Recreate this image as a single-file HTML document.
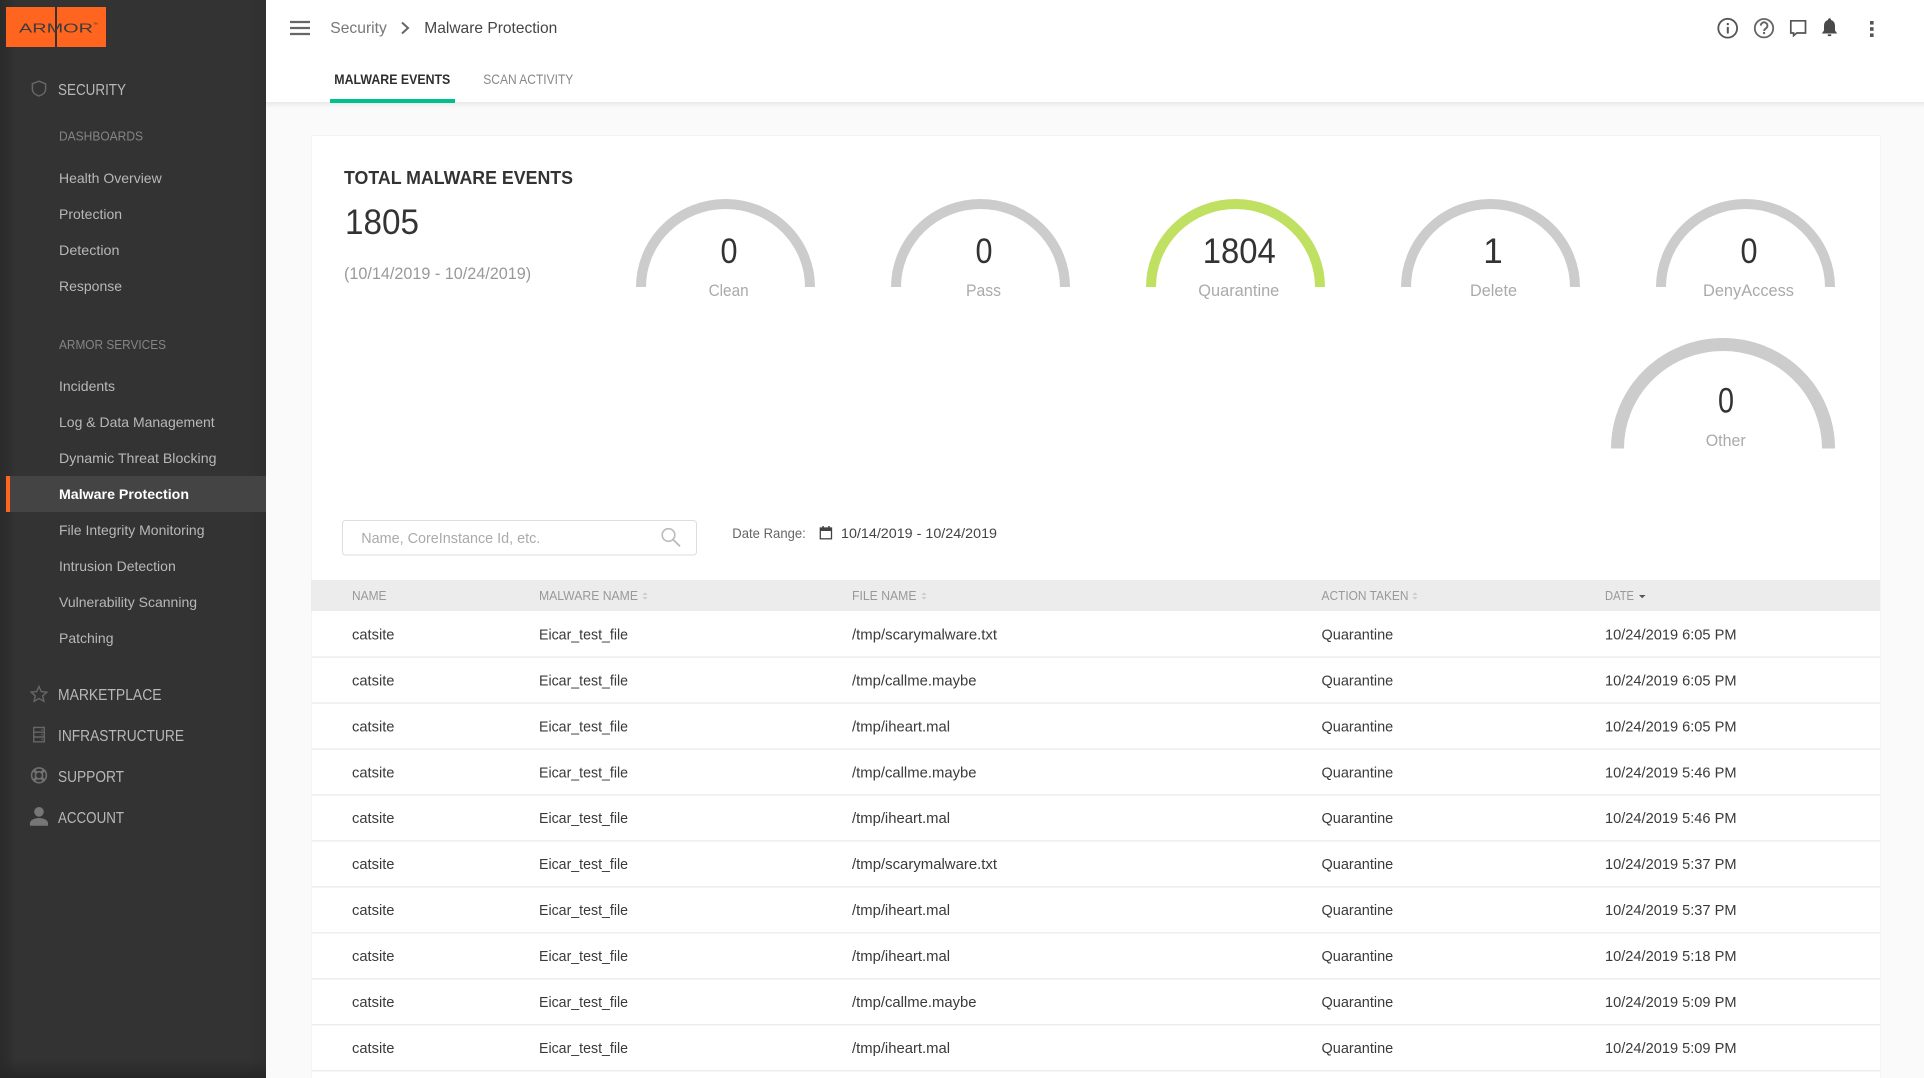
<!DOCTYPE html>
<html lang="en">
<head>
<meta charset="utf-8">
<title>Malware Protection</title>
<style>
html,body{margin:0;padding:0;background:#fafafa;width:1924px;height:1078px;overflow:hidden}
svg{display:block}
text{font-family:"Liberation Sans",Arial,sans-serif}
.nav{font-size:14px;fill:#b8b8b8}
.sec{font-size:15.5px;fill:#b8b8b8}
.lab{font-size:12.5px;fill:#858585}
.th{font-size:12.5px;fill:#999}
.td{font-size:14.5px;fill:#3a3a3a}
.val{font-size:35px;fill:#333;text-anchor:middle}
.cap{font-size:17px;fill:#aaa}
.g{fill:none;stroke:#ccc;stroke-width:10}
</style>
</head>
<body>
<svg xmlns="http://www.w3.org/2000/svg" width="1924" height="1078" viewBox="0 0 1924 1078">
<defs>
<linearGradient id="sg" x1="0" x2="1" y1="0" y2="0"><stop offset="0" stop-color="#2a2a2a"/><stop offset="0.4" stop-color="#2d2d2d"/><stop offset="1" stop-color="#333"/></linearGradient>
<linearGradient id="sr" x1="0" x2="1" y1="0" y2="0"><stop offset="0" stop-color="#333"/><stop offset="1" stop-color="#2f2f2f"/></linearGradient>
<linearGradient id="sb" x1="0" x2="0" y1="0" y2="1"><stop offset="0" stop-color="#2a2a2a" stop-opacity="0"/><stop offset="1" stop-color="#262626"/></linearGradient>
<linearGradient id="hs" x1="0" x2="0" y1="0" y2="1"><stop offset="0" stop-color="#e9e9e9"/><stop offset="1" stop-color="#fafafa"/></linearGradient>
</defs>
<rect width="1924" height="1078" fill="#fafafa"/>

<!-- sidebar -->
<rect x="0" y="0" width="266" height="1078" fill="#333"/>
<rect x="0" y="0" width="16" height="1078" fill="url(#sg)"/>
<rect x="250" y="0" width="16" height="1078" fill="url(#sr)"/>
<rect x="0" y="1058" width="266" height="20" fill="url(#sb)"/>
<rect x="6" y="7" width="100" height="40" fill="#ff651f"/>
<rect x="55" y="7" width="2" height="40" fill="#333"/>
<text x="19" y="32.7" font-size="13" fill="#3c3c3c" textLength="74" lengthAdjust="spacingAndGlyphs">ARMOR</text>
<text x="93" y="26" font-size="5" fill="#3c3c3c">™</text>

<path d="M39 81.2L45.6 83.8V89C45.6 92.4 42.8 94.9 39 96C35.2 94.9 32.4 92.4 32.4 89V83.8Z" fill="none" stroke="#666" stroke-width="1.5"/>
<text class="sec" x="58" y="95" textLength="68" lengthAdjust="spacingAndGlyphs">SECURITY</text>
<text class="lab" x="59" y="140.5" textLength="84" lengthAdjust="spacingAndGlyphs">DASHBOARDS</text>
<text class="nav" x="59" y="183">Health Overview</text>
<text class="nav" x="59" y="219">Protection</text>
<text class="nav" x="59" y="255" textLength="60.5" lengthAdjust="spacingAndGlyphs">Detection</text>
<text class="nav" x="59" y="291">Response</text>
<text class="lab" x="59" y="349" textLength="107" lengthAdjust="spacingAndGlyphs">ARMOR SERVICES</text>
<text class="nav" x="59" y="391">Incidents</text>
<text class="nav" x="59" y="427">Log &amp; Data Management</text>
<text class="nav" x="59" y="463" textLength="157.5" lengthAdjust="spacingAndGlyphs">Dynamic Threat Blocking</text>
<rect x="6" y="476" width="260" height="36" fill="#444"/>
<rect x="6" y="476" width="4" height="36" fill="#ff651f"/>
<text x="59" y="499" font-size="14" font-weight="700" fill="#fff" textLength="130" lengthAdjust="spacingAndGlyphs">Malware Protection</text>
<text class="nav" x="59" y="535">File Integrity Monitoring</text>
<text class="nav" x="59" y="571">Intrusion Detection</text>
<text class="nav" x="59" y="607">Vulnerability Scanning</text>
<text class="nav" x="59" y="643">Patching</text>

<path d="M39 686.5L41.3 691.6L46.8 692.2L42.7 695.9L43.9 701.2L39 698.5L34.1 701.2L35.3 695.9L31.2 692.2L36.7 691.6Z" fill="none" stroke="#666" stroke-width="1.4"/>
<text class="sec" x="58" y="700" textLength="103.5" lengthAdjust="spacingAndGlyphs">MARKETPLACE</text>
<path d="M33.7 727.4H44.3V741.8H33.7ZM33.7 732.2H44.3M33.7 737H44.3" fill="none" stroke="#666" stroke-width="1.4"/>
<circle cx="42" cy="729.9" r=".8" fill="#666"/><circle cx="42" cy="734.7" r=".8" fill="#666"/><circle cx="42" cy="739.4" r=".8" fill="#666"/>
<text class="sec" x="58" y="741" textLength="126" lengthAdjust="spacingAndGlyphs">INFRASTRUCTURE</text>
<circle cx="39" cy="775.3" r="7.4" fill="none" stroke="#707070" stroke-width="1.6"/>
<circle cx="39" cy="775.3" r="3.6" fill="none" stroke="#707070" stroke-width="1.6"/>
<path d="M33.9 770.2L36.4 772.7M44.1 770.2L41.6 772.7M33.9 780.4L36.4 777.9M44.1 780.4L41.6 777.9" stroke="#707070" stroke-width="3"/>
<text class="sec" x="58" y="782" textLength="66" lengthAdjust="spacingAndGlyphs">SUPPORT</text>
<circle cx="39" cy="811.8" r="4.8" fill="#777"/>
<path d="M30 825.8V823.2C30 820 35 818 39 818S48 820 48 823.2V825.8Z" fill="#777"/>
<text class="sec" x="58" y="823" textLength="66" lengthAdjust="spacingAndGlyphs">ACCOUNT</text>

<!-- header -->
<rect x="266" y="102" width="1658" height="6" fill="url(#hs)"/>
<rect x="266" y="0" width="1658" height="102" fill="#fff"/>
<path d="M290 22H310M290 28H310M290 34H310" stroke="#666" stroke-width="2.2"/>
<text x="330.3" y="33" font-size="15.8" fill="#777" textLength="56.5" lengthAdjust="spacingAndGlyphs">Security</text>
<path d="M402 22.5L408 28L402 33.5" fill="none" stroke="#666" stroke-width="2"/>
<text x="424.3" y="33" font-size="15.8" fill="#444" textLength="133" lengthAdjust="spacingAndGlyphs">Malware Protection</text>
<text x="334.3" y="84" font-size="14" font-weight="700" fill="#2f2f2f" textLength="116" lengthAdjust="spacingAndGlyphs">MALWARE EVENTS</text>
<text x="483.3" y="84" font-size="14" fill="#888" textLength="90" lengthAdjust="spacingAndGlyphs">SCAN ACTIVITY</text>
<rect x="330" y="99" width="125" height="4" fill="#00c08b"/>

<!-- top right icons -->
<circle cx="1727.7" cy="28.2" r="9.4" fill="none" stroke="#555" stroke-width="1.8"/>
<rect x="1726.8" y="27" width="2" height="6.5" fill="#555"/><rect x="1726.8" y="23" width="2" height="2.2" fill="#555"/>
<circle cx="1764" cy="28.2" r="9.2" fill="none" stroke="#666" stroke-width="1.8"/>
<path d="M1760.8 25.6A3.3 3.3 0 1 1 1766 28.3C1764.8 29.1 1764.1 29.7 1764.1 31" fill="none" stroke="#666" stroke-width="1.9"/>
<rect x="1763" y="32" width="2.1" height="2.1" fill="#666"/>
<path d="M1790.8 20.8H1805.5V33H1796.8L1793.6 35.6V33H1790.8Z" fill="none" stroke="#555" stroke-width="1.7"/>
<path d="M1829.5 18.3C1830.5 18.3 1831 19 1831 20C1833.8 20.8 1835 23 1835 26V30.5L1837.2 33.5H1821.8L1824 30.5V26C1824 23 1825.2 20.8 1828 20C1828 19 1828.5 18.3 1829.5 18.3Z" fill="#4a4a4a"/>
<rect x="1827.8" y="34.3" width="3.4" height="1.8" fill="#4a4a4a"/>
<rect x="1870" y="21" width="3.6" height="3.6" fill="#555"/><rect x="1870" y="27.2" width="3.6" height="3.6" fill="#555"/><rect x="1870" y="33.4" width="3.6" height="3.6" fill="#555"/>

<!-- card -->
<rect x="311" y="135" width="1570" height="943" fill="#f3f3f3"/>
<rect x="312" y="136" width="1568" height="942" fill="#fff"/>
<text x="344" y="184" font-size="18.5" font-weight="700" fill="#333" textLength="229" lengthAdjust="spacingAndGlyphs">TOTAL MALWARE EVENTS</text>
<text x="345" y="234" font-size="35" fill="#333" textLength="74" lengthAdjust="spacingAndGlyphs">1805</text>
<text x="344" y="279" font-size="16.2" fill="#999">(10/14/2019 - 10/24/2019)</text>

<!-- gauges -->
<path class="g" d="M641 287A84.5 83 0 0 1 810 287"/>
<text class="val" x="729" y="263" textLength="17" lengthAdjust="spacingAndGlyphs">0</text>
<text class="cap" x="708.6" y="296" textLength="40" lengthAdjust="spacingAndGlyphs">Clean</text>

<path class="g" d="M896 287A84.5 83 0 0 1 1065 287"/>
<text class="val" x="984" y="263" textLength="17" lengthAdjust="spacingAndGlyphs">0</text>
<text class="cap" x="966" y="296" textLength="35" lengthAdjust="spacingAndGlyphs">Pass</text>

<path class="g" style="stroke:#bfe060" d="M1151 287A84.5 83 0 0 1 1320 287"/>
<text class="val" x="1239.3" y="263" textLength="73" lengthAdjust="spacingAndGlyphs">1804</text>
<text class="cap" x="1198.3" y="296" textLength="81" lengthAdjust="spacingAndGlyphs">Quarantine</text>

<path class="g" d="M1406 287A84.5 83 0 0 1 1575 287"/>
<text class="val" x="1493" y="263">1</text>
<text class="cap" x="1470" y="296" textLength="47" lengthAdjust="spacingAndGlyphs">Delete</text>

<path class="g" d="M1661 287A84.5 83 0 0 1 1830 287"/>
<text class="val" x="1749" y="263" textLength="17" lengthAdjust="spacingAndGlyphs">0</text>
<text class="cap" x="1703" y="296" textLength="91" lengthAdjust="spacingAndGlyphs">DenyAccess</text>

<path class="g" style="stroke-width:13" d="M1617.5 448.5A105.5 104 0 0 1 1828.5 448.5"/>
<text class="val" x="1726" y="412.7" textLength="16" lengthAdjust="spacingAndGlyphs">0</text>
<text class="cap" x="1705.7" y="446" textLength="40" lengthAdjust="spacingAndGlyphs">Other</text>

<!-- search / date -->
<rect x="342.5" y="520.5" width="354" height="34.5" rx="3" fill="#fff" stroke="#ddd"/>
<text x="361.3" y="543" font-size="15" fill="#aaa" textLength="179" lengthAdjust="spacingAndGlyphs">Name, CoreInstance Id, etc.</text>
<circle cx="668.5" cy="535" r="6.3" fill="none" stroke="#bbb" stroke-width="1.6"/>
<path d="M673 539.5L680 546.3" stroke="#bbb" stroke-width="1.8"/>
<text x="732.3" y="538" font-size="14" fill="#666" textLength="73.5" lengthAdjust="spacingAndGlyphs">Date Range:</text>
<rect x="820.3" y="528" width="11.2" height="10.8" fill="none" stroke="#444" stroke-width="1.3"/>
<rect x="820" y="527.6" width="12" height="3.4" fill="#444"/>
<rect x="822.3" y="526" width="1.5" height="2" fill="#444"/><rect x="828.2" y="526" width="1.5" height="2" fill="#444"/>
<text x="841" y="538" font-size="14" fill="#444" textLength="156" lengthAdjust="spacingAndGlyphs">10/14/2019 - 10/24/2019</text>

<!-- table header -->
<rect x="311" y="580" width="1569" height="31" fill="#ececec"/>
<text class="th" x="352" y="600" textLength="34.5" lengthAdjust="spacingAndGlyphs">NAME</text>
<text class="th" x="539" y="600" textLength="99" lengthAdjust="spacingAndGlyphs">MALWARE NAME</text>
<path d="M642.5 595L645 592.4L647.5 595ZM642.5 597L645 599.6L647.5 597Z" fill="#ccc"/>
<text class="th" x="852" y="600" textLength="64.5" lengthAdjust="spacingAndGlyphs">FILE NAME</text>
<path d="M921.5 595L924 592.4L926.5 595ZM921.5 597L924 599.6L926.5 597Z" fill="#ccc"/>
<text class="th" x="1321.5" y="600" textLength="87" lengthAdjust="spacingAndGlyphs">ACTION TAKEN</text>
<path d="M1412.5 595L1415 592.4L1417.5 595ZM1412.5 597L1415 599.6L1417.5 597Z" fill="#ccc"/>
<text class="th" x="1605" y="600" textLength="29" lengthAdjust="spacingAndGlyphs">DATE</text>
<path d="M1639 595H1645.5L1642.2 598.2Z" fill="#555"/>

<!-- table rows -->
<g transform="translate(0,639.4)"><rect x="312" y="17" width="1568" height="1.4" fill="#ececec"/><text class="td" x="352" y="0" textLength="42.5" lengthAdjust="spacingAndGlyphs">catsite</text><text class="td" x="539" y="0" textLength="89" lengthAdjust="spacingAndGlyphs">Eicar_test_file</text><text class="td" x="852" y="0" textLength="145" lengthAdjust="spacingAndGlyphs">/tmp/scarymalware.txt</text><text class="td" x="1321.5" y="0">Quarantine</text><text class="td" x="1605" y="0" textLength="131.5" lengthAdjust="spacingAndGlyphs">10/24/2019 6:05 PM</text></g>
<g transform="translate(0,685.35)"><rect x="312" y="17" width="1568" height="1.4" fill="#ececec"/><text class="td" x="352" y="0" textLength="42.5" lengthAdjust="spacingAndGlyphs">catsite</text><text class="td" x="539" y="0" textLength="89" lengthAdjust="spacingAndGlyphs">Eicar_test_file</text><text class="td" x="852" y="0" textLength="124.5" lengthAdjust="spacingAndGlyphs">/tmp/callme.maybe</text><text class="td" x="1321.5" y="0">Quarantine</text><text class="td" x="1605" y="0" textLength="131.5" lengthAdjust="spacingAndGlyphs">10/24/2019 6:05 PM</text></g>
<g transform="translate(0,731.3)"><rect x="312" y="17" width="1568" height="1.4" fill="#ececec"/><text class="td" x="352" y="0" textLength="42.5" lengthAdjust="spacingAndGlyphs">catsite</text><text class="td" x="539" y="0" textLength="89" lengthAdjust="spacingAndGlyphs">Eicar_test_file</text><text class="td" x="852" y="0" textLength="98" lengthAdjust="spacingAndGlyphs">/tmp/iheart.mal</text><text class="td" x="1321.5" y="0">Quarantine</text><text class="td" x="1605" y="0" textLength="131.5" lengthAdjust="spacingAndGlyphs">10/24/2019 6:05 PM</text></g>
<g transform="translate(0,777.25)"><rect x="312" y="17" width="1568" height="1.4" fill="#ececec"/><text class="td" x="352" y="0" textLength="42.5" lengthAdjust="spacingAndGlyphs">catsite</text><text class="td" x="539" y="0" textLength="89" lengthAdjust="spacingAndGlyphs">Eicar_test_file</text><text class="td" x="852" y="0" textLength="124.5" lengthAdjust="spacingAndGlyphs">/tmp/callme.maybe</text><text class="td" x="1321.5" y="0">Quarantine</text><text class="td" x="1605" y="0" textLength="131.5" lengthAdjust="spacingAndGlyphs">10/24/2019 5:46 PM</text></g>
<g transform="translate(0,823.2)"><rect x="312" y="17" width="1568" height="1.4" fill="#ececec"/><text class="td" x="352" y="0" textLength="42.5" lengthAdjust="spacingAndGlyphs">catsite</text><text class="td" x="539" y="0" textLength="89" lengthAdjust="spacingAndGlyphs">Eicar_test_file</text><text class="td" x="852" y="0" textLength="98" lengthAdjust="spacingAndGlyphs">/tmp/iheart.mal</text><text class="td" x="1321.5" y="0">Quarantine</text><text class="td" x="1605" y="0" textLength="131.5" lengthAdjust="spacingAndGlyphs">10/24/2019 5:46 PM</text></g>
<g transform="translate(0,869.15)"><rect x="312" y="17" width="1568" height="1.4" fill="#ececec"/><text class="td" x="352" y="0" textLength="42.5" lengthAdjust="spacingAndGlyphs">catsite</text><text class="td" x="539" y="0" textLength="89" lengthAdjust="spacingAndGlyphs">Eicar_test_file</text><text class="td" x="852" y="0" textLength="145" lengthAdjust="spacingAndGlyphs">/tmp/scarymalware.txt</text><text class="td" x="1321.5" y="0">Quarantine</text><text class="td" x="1605" y="0" textLength="131.5" lengthAdjust="spacingAndGlyphs">10/24/2019 5:37 PM</text></g>
<g transform="translate(0,915.1)"><rect x="312" y="17" width="1568" height="1.4" fill="#ececec"/><text class="td" x="352" y="0" textLength="42.5" lengthAdjust="spacingAndGlyphs">catsite</text><text class="td" x="539" y="0" textLength="89" lengthAdjust="spacingAndGlyphs">Eicar_test_file</text><text class="td" x="852" y="0" textLength="98" lengthAdjust="spacingAndGlyphs">/tmp/iheart.mal</text><text class="td" x="1321.5" y="0">Quarantine</text><text class="td" x="1605" y="0" textLength="131.5" lengthAdjust="spacingAndGlyphs">10/24/2019 5:37 PM</text></g>
<g transform="translate(0,961.05)"><rect x="312" y="17" width="1568" height="1.4" fill="#ececec"/><text class="td" x="352" y="0" textLength="42.5" lengthAdjust="spacingAndGlyphs">catsite</text><text class="td" x="539" y="0" textLength="89" lengthAdjust="spacingAndGlyphs">Eicar_test_file</text><text class="td" x="852" y="0" textLength="98" lengthAdjust="spacingAndGlyphs">/tmp/iheart.mal</text><text class="td" x="1321.5" y="0">Quarantine</text><text class="td" x="1605" y="0" textLength="131.5" lengthAdjust="spacingAndGlyphs">10/24/2019 5:18 PM</text></g>
<g transform="translate(0,1007)"><rect x="312" y="17" width="1568" height="1.4" fill="#ececec"/><text class="td" x="352" y="0" textLength="42.5" lengthAdjust="spacingAndGlyphs">catsite</text><text class="td" x="539" y="0" textLength="89" lengthAdjust="spacingAndGlyphs">Eicar_test_file</text><text class="td" x="852" y="0" textLength="124.5" lengthAdjust="spacingAndGlyphs">/tmp/callme.maybe</text><text class="td" x="1321.5" y="0">Quarantine</text><text class="td" x="1605" y="0" textLength="131.5" lengthAdjust="spacingAndGlyphs">10/24/2019 5:09 PM</text></g>
<g transform="translate(0,1053.1)"><rect x="312" y="17" width="1568" height="1.4" fill="#ececec"/><text class="td" x="352" y="0" textLength="42.5" lengthAdjust="spacingAndGlyphs">catsite</text><text class="td" x="539" y="0" textLength="89" lengthAdjust="spacingAndGlyphs">Eicar_test_file</text><text class="td" x="852" y="0" textLength="98" lengthAdjust="spacingAndGlyphs">/tmp/iheart.mal</text><text class="td" x="1321.5" y="0">Quarantine</text><text class="td" x="1605" y="0" textLength="131.5" lengthAdjust="spacingAndGlyphs">10/24/2019 5:09 PM</text></g>
</svg>
</body>
</html>
